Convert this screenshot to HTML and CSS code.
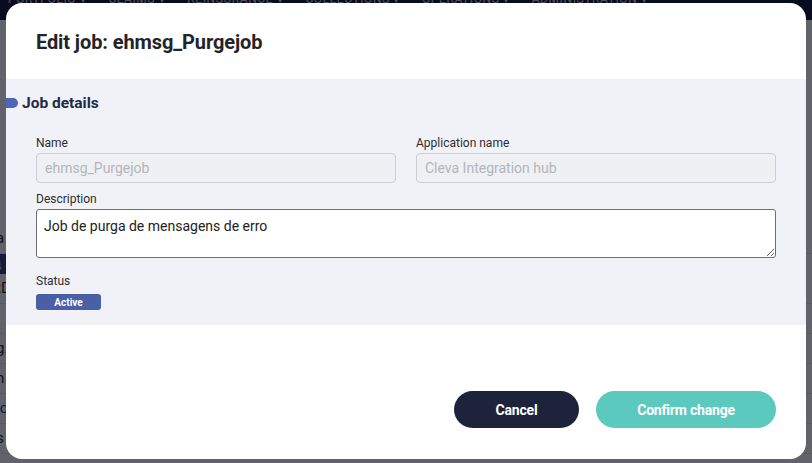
FILE: index.html
```html
<!DOCTYPE html>
<html>
<head>
<meta charset="utf-8">
<link rel="stylesheet" href="styles.css">
</head>
<body>
<div class="page">
  <nav class="topnav">
    <span>PORTFOLIO ▾</span><span>CLAIMS ▾</span><span>REINSURANCE ▾</span><span>COLLECTIONS ▾</span><span>OPERATIONS ▾</span><span>ADMINISTRATION ▾</span>
  </nav>
  <div class="behind">
    <div class="brow">a</div>
    <div class="brow sel">↓</div>
    <div class="brow">tD</div>
    <div class="brow"></div>
    <div class="brow">g.</div>
    <div class="brow">n</div>
    <div class="brow link">lo</div>
    <div class="brow">s</div>
  </div>
  <div class="dim"></div>
</div>

<div class="modal">
  <header class="modal-head">
    <h1>Edit job: ehmsg_Purgejob</h1>
  </header>
  <section class="details">
    <h2 class="sec-title"><span class="pill"></span>Job details</h2>
    <div class="grid">
      <div class="field">
        <label>Name</label>
        <input class="inp" type="text" placeholder="ehmsg_Purgejob" disabled>
      </div>
      <div class="field">
        <label>Application name</label>
        <input class="inp" type="text" placeholder="Cleva Integration hub" disabled>
      </div>
      <div class="field wide">
        <label>Description</label>
        <textarea class="ta">Job de purga de mensagens de erro</textarea>
      </div>
      <div class="field wide status">
        <label>Status</label>
        <span class="badge">Active</span>
      </div>
    </div>
  </section>
  <footer class="modal-foot">
    <button class="btn cancel">Cancel</button>
    <button class="btn confirm">Confirm change</button>
  </footer>
</div>
</body>
</html>
```

FILE: styles.css
```css
* { box-sizing: border-box; }
html, body { margin: 0; padding: 0; }
body {
  width: 812px;
  height: 463px;
  overflow: hidden;
  font-family: Roboto, "Liberation Sans", Arial, sans-serif;
  background: #ffffff;
  position: relative;
}
.page { width: 812px; height: 463px; position: relative; overflow: hidden; }
.topnav {
  background: #0b1033;
  display: flex;
  gap: 22px;
  padding-left: 8px;
  align-items: flex-start;
  color: #c8cbe0;
  font-size: 12px;
  letter-spacing: 0.6px;
  line-height: 10px;
  margin-top: -6px;
  height: 26px;
  white-space: nowrap;
}
.behind { background: #f3f3f6; height: 443px; padding-top: 204px; }
.brow {
  height: 30px;
  border-bottom: 1px solid #dcdce2;
  font-size: 15px;
  color: #222;
  line-height: 29px;
  margin-left: -4px;
}
.brow.sel {
  width: 40px;
  height: 20px;
  line-height: 20px;
  background: #2b3a82;
  color: #fff;
  border-bottom: none;
}
.brow.link { color: #1f3f8f; }
.dim {
  position: absolute;
  inset: 0;
  background: rgba(8, 8, 20, 0.62);
}
.modal {
  position: absolute;
  left: 6px;
  top: 3px;
  width: 800px;
  height: 456px;
  background: #ffffff;
  border-radius: 16px;
  display: flex;
  flex-direction: column;
  overflow: hidden;
}
.modal-head {
  height: 76px;
  display: flex;
  align-items: center;
  padding: 0 30px;
  flex: none;
}
.modal-head h1 {
  margin: 0;
  font-size: 20px;
  font-weight: 700;
  color: #232428;
  letter-spacing: -0.1px;
  padding-top: 1px;
}
.details {
  background: #f1f2f7;
  height: 246px;
  flex: none;
  padding: 12px 30px 15px 0;
}
.sec-title {
  margin: 0;
  height: 24px;
  display: flex;
  align-items: center;
  gap: 4px;
  font-size: 15.5px;
  font-weight: 700;
  color: #1e2a47;
}
.pill {
  display: block;
  width: 12px;
  height: 10px;
  background: #4e66b4;
  border-radius: 0 5px 5px 0;
}
.grid {
  display: grid;
  grid-template-columns: 360px 360px;
  column-gap: 20px;
  row-gap: 8px;
  padding-left: 30px;
  margin-top: 20px;
}
.field { display: flex; flex-direction: column; }
.field.wide { grid-column: 1 / span 2; }
.field label {
  font-size: 12px;
  line-height: 17px;
  color: #2c2d31;
  margin-bottom: 1px;
}
.inp {
  height: 30px;
  border: 1px solid #cdced3;
  border-radius: 4px;
  background: #eff0f4;
  padding: 0 8px;
  font-family: inherit;
  font-size: 14px;
  color: #b4b5ba;
}
.inp::placeholder { color: #b4b5ba; }
.ta {
  height: 49px;
  border: 1px solid #6e6f76;
  border-radius: 3px;
  background: #fff;
  padding: 7px 7px;
  font-family: inherit;
  font-size: 14px;
  color: #222;
  resize: vertical;
  line-height: 18px;
}
.status { margin-top: 7px; }
.status label { margin-bottom: 4px; }
.badge {
  width: 65px;
  height: 16px;
  background: #4b5fa6;
  color: #fff;
  border-radius: 3px;
  font-size: 10px;
  font-weight: 700;
  display: flex;
  align-items: center;
  justify-content: center;
}
.modal-foot {
  flex: 1;
  display: flex;
  justify-content: flex-end;
  align-items: flex-start;
  gap: 17px;
  padding: 66px 30px 0 0;
}
.btn {
  height: 37px;
  border: none;
  border-radius: 19px;
  color: #fff;
  font-family: inherit;
  font-size: 14px;
  font-weight: 700;
  letter-spacing: -0.2px;
}
.cancel { width: 125px; background: #1c233a; }
.confirm { width: 180px; background: #5cc9bf; }
```
